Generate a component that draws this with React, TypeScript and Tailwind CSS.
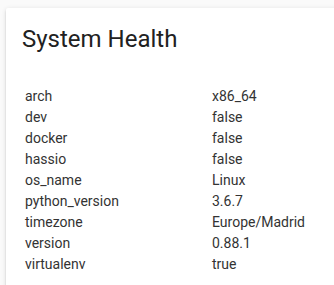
const rows: [string, string][] = [
  ["arch", "x86_64"],
  ["dev", "false"],
  ["docker", "false"],
  ["hassio", "false"],
  ["os_name", "Linux"],
  ["python_version", "3.6.7"],
  ["timezone", "Europe/Madrid"],
  ["version", "0.88.1"],
  ["virtualenv", "true"],
];

export default function App() {
  return (
    <div
      className="h-[285px] w-[334px] overflow-hidden bg-[#fafafa] pl-[6px] pt-[8px]"
      style={{ fontFamily: "Roboto, 'Noto Sans', sans-serif" }}
    >
      <div className="h-[320px] w-[380px] rounded-[2px] bg-white shadow-[0_2px_2px_0_rgba(0,0,0,0.14),0_1px_5px_0_rgba(0,0,0,0.12),0_3px_1px_-2px_rgba(0,0,0,0.2)]">
        <div className="pl-4 pt-[15px] text-[24px] leading-[32px] text-[#212121]">
          System Health
        </div>
        <div className="mt-[31px] pl-[19px] text-[14px] leading-[21px] text-[#333333]">
          {rows.map(([k, v]) => (
            <div key={k} className="flex h-[21px]">
              <div className="w-[187px]">{k}</div>
              <div>{v}</div>
            </div>
          ))}
        </div>
      </div>
    </div>
  );
}
